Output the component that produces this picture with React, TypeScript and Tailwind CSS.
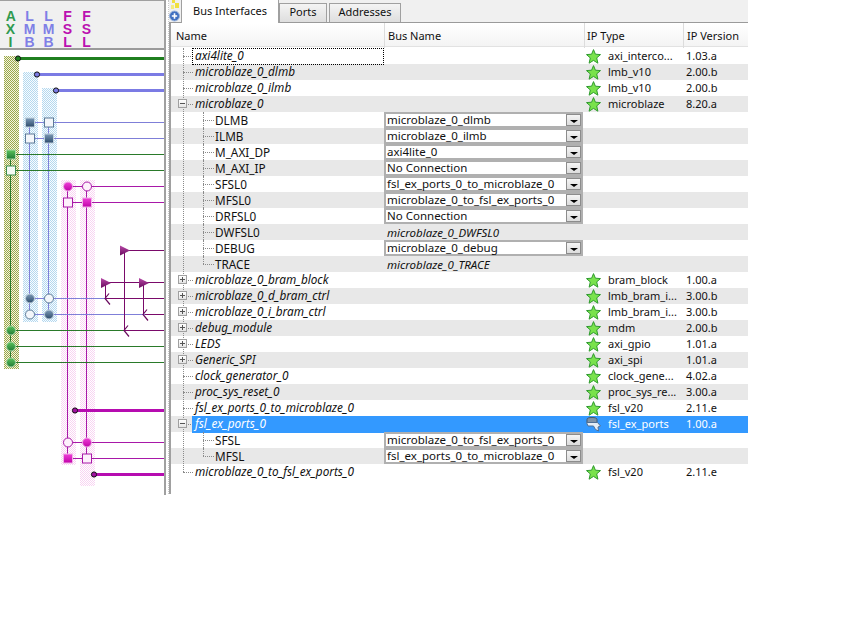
type Row = {
  name: string;
  level?: 0 | 1;
  toggle?: "plus" | "minus";
  bus?: string;
  busText?: string;
  type?: string;
  version?: string;
  selected?: boolean;
  focused?: boolean;
  last?: boolean;
};

const rows: Row[] = [
  { name: "axi4lite_0", type: "axi_interco...", version: "1.03.a", focused: true },
  { name: "microblaze_0_dlmb", type: "lmb_v10", version: "2.00.b" },
  { name: "microblaze_0_ilmb", type: "lmb_v10", version: "2.00.b" },
  { name: "microblaze_0", toggle: "minus", type: "microblaze", version: "8.20.a" },
  { name: "DLMB", level: 1, bus: "microblaze_0_dlmb" },
  { name: "ILMB", level: 1, bus: "microblaze_0_ilmb" },
  { name: "M_AXI_DP", level: 1, bus: "axi4lite_0" },
  { name: "M_AXI_IP", level: 1, bus: "No Connection" },
  { name: "SFSL0", level: 1, bus: "fsl_ex_ports_0_to_microblaze_0" },
  { name: "MFSL0", level: 1, bus: "microblaze_0_to_fsl_ex_ports_0" },
  { name: "DRFSL0", level: 1, bus: "No Connection" },
  { name: "DWFSL0", level: 1, busText: "microblaze_0_DWFSL0" },
  { name: "DEBUG", level: 1, bus: "microblaze_0_debug" },
  { name: "TRACE", level: 1, busText: "microblaze_0_TRACE", last: true },
  { name: "microblaze_0_bram_block", toggle: "plus", type: "bram_block", version: "1.00.a" },
  { name: "microblaze_0_d_bram_ctrl", toggle: "plus", type: "lmb_bram_i...", version: "3.00.b" },
  { name: "microblaze_0_i_bram_ctrl", toggle: "plus", type: "lmb_bram_i...", version: "3.00.b" },
  { name: "debug_module", toggle: "plus", type: "mdm", version: "2.00.b" },
  { name: "LEDS", toggle: "plus", type: "axi_gpio", version: "1.01.a" },
  { name: "Generic_SPI", toggle: "plus", type: "axi_spi", version: "1.01.a" },
  { name: "clock_generator_0", type: "clock_gene...", version: "4.02.a" },
  { name: "proc_sys_reset_0", type: "proc_sys_re...", version: "3.00.a" },
  { name: "fsl_ex_ports_0_to_microblaze_0", type: "fsl_v20", version: "2.11.e" },
  { name: "fsl_ex_ports_0", toggle: "minus", type: "fsl_ex_ports", version: "1.00.a", selected: true },
  { name: "SFSL", level: 1, bus: "microblaze_0_to_fsl_ex_ports_0" },
  { name: "MFSL", level: 1, bus: "fsl_ex_ports_0_to_microblaze_0", last: true },
  { name: "microblaze_0_to_fsl_ex_ports_0", type: "fsl_v20", version: "2.11.e" },
];

const columnLetters = [
  { letters: "A X I", color: "text-[#2f9a4f]" },
  { letters: "L M B", color: "text-[#7f7fe6]" },
  { letters: "L M B", color: "text-[#7f7fe6]" },
  { letters: "F S L", color: "text-[#bb10b0]" },
  { letters: "F S L", color: "text-[#bb10b0]" },
];

function Square({ x, y, fill, stroke }: { x: number; y: number; fill: string; stroke: string }) {
  return <rect x={x - 4.5} y={y - 4.5} width="9" height="9" fill={fill} stroke={stroke} strokeWidth="1" />;
}

function Ball({ x, y, fill, stroke }: { x: number; y: number; fill: string; stroke: string }) {
  return <circle cx={x} cy={y} r="4.5" fill={fill} stroke={stroke} strokeWidth="1" />;
}

function BusEnd({ x, y, fill }: { x: number; y: number; fill: string }) {
  return <circle cx={x} cy={y} r="2.6" fill={fill} stroke="#111" strokeWidth="1" />;
}

function Arrow({ x, y }: { x: number; y: number }) {
  return <path d={`M${x + 4} ${y - 5} L${x} ${y} L${x + 5} ${y + 6}`} fill="none" stroke="#6a0a5e" strokeWidth="1.2" />;
}

function Triangle({ x, y }: { x: number; y: number }) {
  return <path d={`M${x} ${y - 5} L${x + 10} ${y} L${x} ${y + 5} Z`} fill="url(#tri)" />;
}

function Diagram() {
  const green = "#2a7a2a";
  const blue = "#7f7fd8";
  const mag = "#a818a8";
  const purple = "#7a0a6a";
  const w = 164;
  return (
    <svg width="164" height="445" viewBox="0 50 164 445" className="block">
      <defs>
        <pattern id="hOlive" width="2" height="2" patternUnits="userSpaceOnUse">
          <rect width="2" height="2" fill="#f4f4e0" />
          <rect width="1" height="1" fill="#9aa84a" />
          <rect x="1" y="1" width="1" height="1" fill="#9aa84a" />
        </pattern>
        <pattern id="hBlue" width="2" height="2" patternUnits="userSpaceOnUse">
          <rect width="2" height="2" fill="#f8fcff" />
          <rect width="1" height="1" fill="#b4d8ee" />
          <rect x="1" y="1" width="1" height="1" fill="#b4d8ee" />
        </pattern>
        <pattern id="hPink" width="2" height="2" patternUnits="userSpaceOnUse">
          <rect width="2" height="2" fill="#ffffff" />
          <rect width="1" height="1" fill="#f8d4f2" />
          <rect x="1" y="1" width="1" height="1" fill="#f8d4f2" />
        </pattern>
        <linearGradient id="gGreen" x1="0" y1="0" x2="0" y2="1">
          <stop offset="0" stopColor="#5cc45c" />
          <stop offset="1" stopColor="#1f7a35" />
        </linearGradient>
        <linearGradient id="gSteel" x1="0" y1="0" x2="0" y2="1">
          <stop offset="0" stopColor="#7d9bb8" />
          <stop offset="1" stopColor="#2c4a6a" />
        </linearGradient>
        <linearGradient id="gMag" x1="0" y1="0" x2="0" y2="1">
          <stop offset="0" stopColor="#f040d8" />
          <stop offset="1" stopColor="#c000a8" />
        </linearGradient>
        <linearGradient id="tri" x1="0" y1="0" x2="0" y2="1">
          <stop offset="0" stopColor="#b84aa8" />
          <stop offset="1" stopColor="#6a0a5e" />
        </linearGradient>
      </defs>

      <rect x="4" y="56" width="15" height="313" fill="url(#hOlive)" />
      <rect x="23" y="72" width="15" height="250" fill="url(#hBlue)" />
      <rect x="42" y="88" width="15" height="234" fill="url(#hBlue)" />
      <rect x="61" y="180" width="15" height="285" fill="url(#hPink)" />
      <rect x="80" y="180" width="15" height="306" fill="url(#hPink)" />

      <g fill="none" strokeWidth="1">
        <path d="M10.5 155V363" stroke={green} />
        <path d="M29.5 122V314" stroke={blue} />
        <path d="M48.5 122V314" stroke={blue} />
        <path d="M67.5 186V458" stroke={mag} />
        <path d="M86.5 186V458" stroke={mag} />

        <path d={`M30 122.5H${w}M30 138.5H${w}`} stroke={blue} />
        <path d={`M11 154.5H${w}M11 170.5H${w}`} stroke={green} />
        <path d={`M68 186.5H${w}M68 202.5H${w}`} stroke={mag} />
        <path d="M30 298.5H106M30 314.5H145" stroke={blue} />
        <path d={`M11 330.5H125M11 346.5H${w}M11 362.5H${w}`} stroke={green} />
        <path d={`M68 442.5H${w}M68 458.5H${w}`} stroke={mag} />

        <path d="M124.5 250V330M105.5 283V298M143.5 283V314" stroke={purple} />
        <path d={`M125 250.5H${w}M106 282.5H${w}M106 298.5H${w}M125 330.5H${w}M145 314.5H${w}`} stroke={purple} />
      </g>

      <rect x="18" y="57" width={w - 18} height="3" fill="#1f7f1f" />
      <rect x="37" y="73" width={w - 37} height="3" fill="#7b7be4" />
      <rect x="56" y="89" width={w - 56} height="3" fill="#7b7be4" />
      <rect x="75" y="409" width={w - 75} height="3" fill="#b60cb0" />
      <rect x="94" y="473" width={w - 94} height="3" fill="#b60cb0" />

      <BusEnd x={18} y={58.5} fill="#1f7f1f" />
      <BusEnd x={37} y={74.5} fill="#7b7be4" />
      <BusEnd x={56} y={90.5} fill="#7b7be4" />
      <BusEnd x={75} y={410.5} fill="#a010a0" />
      <BusEnd x={94} y={474.5} fill="#a010a0" />

      <Square x={30} y={122.5} fill="url(#gSteel)" stroke="#c0d0dc" />
      <Square x={49} y={122.5} fill="#f4f7fb" stroke="#5c7a98" />
      <Square x={30} y={138.5} fill="#f4f7fb" stroke="#5c7a98" />
      <Square x={49} y={138.5} fill="url(#gSteel)" stroke="#c0d0dc" />
      <Square x={11} y={154.5} fill="url(#gGreen)" stroke="#a8d8a8" />
      <Square x={11} y={170.5} fill="#f4fbf4" stroke="#3f8f4f" />

      <Ball x={68} y={186.5} fill="url(#gMag)" stroke="#f0b0e8" />
      <Ball x={87} y={186.5} fill="#fdf0fb" stroke="#a818a8" />
      <Square x={68} y={202.5} fill="#fdf0fb" stroke="#a818a8" />
      <Square x={87} y={202.5} fill="url(#gMag)" stroke="#f0b0e8" />

      <Triangle x={120} y={250.5} />
      <Triangle x={101} y={283} />
      <Triangle x={139} y={283} />
      <Arrow x={105} y={298.5} />
      <Arrow x={143} y={314.5} />
      <Arrow x={124} y={330.5} />

      <Ball x={30} y={298.5} fill="url(#gSteel)" stroke="#c0d0dc" />
      <Ball x={49} y={298.5} fill="#f4f7fb" stroke="#5c7a98" />
      <Ball x={30} y={314.5} fill="#f4f7fb" stroke="#5c7a98" />
      <Ball x={49} y={314.5} fill="url(#gSteel)" stroke="#c0d0dc" />

      <Ball x={11} y={330.5} fill="url(#gGreen)" stroke="#a8d8a8" />
      <Ball x={11} y={346.5} fill="url(#gGreen)" stroke="#a8d8a8" />
      <Ball x={11} y={362.5} fill="url(#gGreen)" stroke="#a8d8a8" />

      <Ball x={68} y={442.5} fill="#fdf0fb" stroke="#a818a8" />
      <Ball x={87} y={442.5} fill="url(#gMag)" stroke="#f0b0e8" />
      <Square x={68} y={458.5} fill="url(#gMag)" stroke="#f0b0e8" />
      <Square x={87} y={458.5} fill="#fdf0fb" stroke="#a818a8" />
    </svg>
  );
}

function StarIcon() {
  return (
    <svg width="15" height="15" viewBox="0 0 15 15" className="block">
      <path
        d="M7.5 .6 9.4 5.2 14.5 5.6 10.7 8.9 11.9 14.2 7.5 11.4 3.1 14.2 4.3 8.9 .5 5.6 5.6 5.2Z"
        fill="#79e24c"
        stroke="#2f9a2f"
        strokeWidth="1"
      />
    </svg>
  );
}

function PortsIcon() {
  return (
    <svg width="15" height="15" viewBox="0 0 15 15" className="block">
      <path d="M1 2.5C1 1 3 .5 6 .5s5 .5 5 2v3H1Z" fill="#7f93a8" stroke="#44586e" />
      <path d="M.5 5.5h11l3 3.5-2.5 1 .5 4-3-1.5-2-3.5H2Z" fill="#e4edf6" stroke="#4f7096" />
    </svg>
  );
}

function PlusIcon() {
  return (
    <svg width="12" height="22" viewBox="0 0 12 22" className="block">
      <rect x="3" y="0" width="3" height="3" fill="#f0e040" />
      <rect x="6" y="3" width="4" height="5" fill="#f0e040" />
      <rect x="2" y="5" width="3" height="4" fill="#f4ec80" />
      <circle cx="5.5" cy="16" r="5" fill="#3f6fc0" stroke="#9ab4dc" />
      <path d="M2.8 16h5.4M5.5 13.3v5.4" stroke="#fff" strokeWidth="1.6" />
    </svg>
  );
}

function Expander({ kind }: { kind: "plus" | "minus" }) {
  return (
    <span className="absolute left-[7px] top-[3px] flex h-[9px] w-[9px] items-center justify-center border border-[#a0a0a0] bg-gradient-to-b from-white to-[#e4e4e4]">
      <span className="absolute h-px w-[5px] bg-[#555]" />
      {kind === "plus" && <span className="absolute h-[5px] w-px bg-[#555]" />}
    </span>
  );
}

function ComboBox({ value }: { value: string }) {
  return (
    <div className="flex h-[16px] w-[199px] border-2 border-[#b0b0b0] bg-white">
      <span className="flex-1 pl-[1px] leading-[12px]">{value}</span>
      <span className="flex w-[15px] items-center justify-center border border-[#8c8c8c] bg-gradient-to-b from-[#f5f5f5] to-[#dcdcdc]">
        <span className="mt-[3px] h-0 w-0 border-x-[4px] border-t-[3px] border-x-transparent border-t-black" />
      </span>
    </div>
  );
}

function NameCell({ row }: { row: Row }) {
  const level = row.level ?? 0;
  return (
    <div className="relative h-full">
      {level === 1 ? (
        <>
          <span className="absolute left-[32px] top-0 h-[8px] border-l border-dotted border-[#8a8a8a]" />
          {!row.last && <span className="absolute left-[32px] top-[8px] h-[8px] border-l border-dotted border-[#8a8a8a]" />}
          <span className="absolute left-[32px] top-[8px] w-[11px] border-t border-dotted border-[#8a8a8a]" />
          <span className="absolute left-[44px] top-0 text-[11.75px] leading-[16px] text-[#111]">{row.name}</span>
        </>
      ) : (
        <>
          <span className="absolute left-[12px] top-[8px] w-[10px] border-t border-dotted border-[#8a8a8a]" />
          {row.toggle && <Expander kind={row.toggle} />}
          <span
            className={`absolute inset-y-0 left-[21px] right-0 pl-[3px] text-[11.75px] italic leading-[14px] ${
              row.selected ? "bg-[#3399ff] text-white" : "text-[#111]"
            } ${row.focused ? "outline-1 -outline-offset-1 outline-dotted outline-black" : ""}`}
          >
            {row.name}
          </span>
        </>
      )}
    </div>
  );
}

function TableRow({ row, index }: { row: Row; index: number }) {
  const shade = index % 2 === 1 ? "bg-[#e8e8e8]" : "bg-white";
  const cell = row.selected ? "bg-[#3399ff] text-white" : "text-[#111]";
  return (
    <div className={`grid h-[16px] grid-cols-[213px_200px_99px_65px] ${shade}`}>
      <NameCell row={row} />
      <div className={`flex items-center ${row.selected ? "bg-[#3399ff]" : ""}`}>
        {row.bus && <ComboBox value={row.bus} />}
        {row.busText && <span className="pl-[3px] italic text-[#111]">{row.busText}</span>}
      </div>
      <div className={`flex items-center gap-[7px] pl-[2px] text-[11px] ${cell}`}>
        {row.type && (row.selected ? <PortsIcon /> : <StarIcon />)}
        <span>{row.type}</span>
      </div>
      <div className={`pl-[3px] text-[11px] leading-[16px] ${cell}`}>{row.version}</div>
    </div>
  );
}

export default function App() {
  return (
    <div className="flex h-[634px] w-[845px] items-start bg-white font-['Noto_Sans',sans-serif] text-[11.5px] text-[#111]">
      <aside className="h-[495px] w-[166px] shrink-0 border-r-2 border-t border-[#a0a0a0]">
        <div className="flex h-[49px] border-b-2 border-[#9a9a9a] bg-[#f0f0f0] pl-[1px] pt-[9px]">
          {columnLetters.map((col, i) => (
            <div
              key={i}
              className={`flex w-[19px] justify-center font-['Liberation_Sans',sans-serif] text-[14px] font-bold leading-[13px] ${col.color}`}
            >
              <span className="w-min text-center">{col.letters}</span>
            </div>
          ))}
        </div>
        <Diagram />
      </aside>

      <div className="h-[494px] w-[3px] shrink-0 border-r border-dotted border-[#c8c8c8]" />

      <main className="w-[579px] shrink-0">
        <div className="flex h-[23px] items-end border-b border-[#9a9a9a] bg-[#f0f0f0] text-[11px]">
          <PlusIcon />
          <button className="z-10 -mb-px flex h-[24px] w-[98px] items-center justify-center border border-b-0 border-[#a0a0a0] bg-white">
            Bus Interfaces
          </button>
          <button className="flex h-[19px] w-[48px] items-center justify-center border border-b-0 border-[#a0a0a0] bg-gradient-to-b from-[#f4f4f4] to-[#dedede] pb-[2px]">
            Ports
          </button>
          <button className="ml-[2px] flex h-[19px] w-[72px] items-center justify-center border border-b-0 border-[#a0a0a0] bg-gradient-to-b from-[#f4f4f4] to-[#dedede] pb-[2px]">
            Addresses
          </button>
        </div>

        <div className="h-[471px] border-l-2 border-[#a0a0a0]">
          <div className="grid h-[24px] grid-cols-[213px_200px_99px_65px] border-b border-[#e2e2e2] bg-gradient-to-b from-white to-[#f4f4f4] text-[11px] leading-[25px]">
            <div className="pl-[5px]">Name</div>
            <div className="border-l border-[#dcdcdc] pl-[3px]">Bus Name</div>
            <div className="border-l border-[#dcdcdc] pl-[2px]">IP Type</div>
            <div className="border-l border-[#dcdcdc] pl-[3px]">IP Version</div>
          </div>
          <div className="relative mt-px">
            <span className="absolute left-[12px] top-0 h-[424px] border-l border-dotted border-[#8a8a8a]" />
            {rows.map((row, i) => (
              <TableRow key={i} row={row} index={i} />
            ))}
          </div>
        </div>
      </main>
    </div>
  );
}
